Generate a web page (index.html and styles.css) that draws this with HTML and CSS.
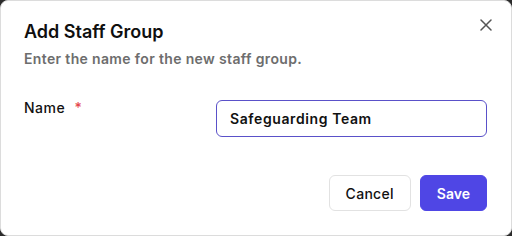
FILE: index.html
```html
<!DOCTYPE html>
<html lang="en">
<head>
    <meta charset="UTF-8">
    <meta name="viewport" content="width=device-width, initial-scale=1.0">
    <title>Add Staff Group</title>
    <link rel="stylesheet" href="styles.css">
</head>
<body>
    <div class="dialog">
        <div class="dialog-header">
            <h2 class="dialog-title">Add Staff Group</h2>
            <p class="dialog-desc">Enter the name for the new staff group.</p>
        </div>
        <button class="close-btn" aria-label="Close">
            <svg width="12" height="12" viewBox="0 0 12 12">
                <path d="M1 1 L11 11 M11 1 L1 11" stroke="#555" stroke-width="1.5" stroke-linecap="round"/>
            </svg>
        </button>
        <div class="form-row">
            <label for="groupName" class="label">Name <span class="required">*</span></label>
            <input id="groupName" class="input" type="text" value="Safeguarding Team">
        </div>
        <div class="actions">
            <button class="btn btn-outline">Cancel</button>
            <button class="btn btn-primary">Save</button>
        </div>
    </div>
</body>
</html>
```

FILE: styles.css
```css
body {
    margin: 0;
    background-color: #2b2b2b;
    font-family: 'Inter', 'Noto Sans', sans-serif;
    color: #111;
}
.dialog {
    position: relative;
    width: 512px;
    height: 236px;
    box-sizing: border-box;
    background-color: #fff;
    border: 1px solid #dcdcdc;
    border-radius: 8px;
    padding: 18px 24px 24px 23px;
    display: flex;
    flex-direction: column;
}
.dialog-title {
    margin: 0;
    font-size: 18px;
    line-height: 26px;
    font-weight: 600;
    color: #0f0f0f;
}
.dialog-desc {
    margin: 5px 0 0;
    font-size: 14px;
    line-height: 18px;
    font-weight: 600;
    letter-spacing: 0.35px;
    color: #6d6d6d;
}
.close-btn {
    position: absolute;
    top: 17px;
    right: 18px;
    background: none;
    border: none;
    padding: 0;
    width: 14px;
    height: 14px;
    display: flex;
    align-items: center;
    justify-content: center;
    cursor: pointer;
}
.form-row {
    display: grid;
    grid-template-columns: 192px 1fr;
    align-items: start;
    margin-top: 32px;
}
.label {
    font-size: 14px;
    font-weight: 500;
    line-height: 16px;
    letter-spacing: 0.5px;
}
.required {
    color: #e5484d;
    margin-left: 5px;
}
.input {
    height: 37px;
    box-sizing: border-box;
    border: 1.5px solid #5a51c9;
    border-radius: 6px;
    padding: 0 13px;
    font-family: inherit;
    font-size: 14px;
    font-weight: 600;
    letter-spacing: 0.6px;
    color: #111;
    outline: none;
}
.actions {
    margin-top: auto;
    display: flex;
    justify-content: flex-end;
    gap: 9px;
}
.btn {
    height: 36px;
    border-radius: 6px;
    font-family: inherit;
    font-size: 14px;
    font-weight: 500;
    letter-spacing: 0.3px;
    cursor: pointer;
}
.btn-outline {
    background-color: #fff;
    border: 1px solid #e2e2e2;
    color: #111;
    padding: 0 16px;
}
.btn-primary {
    background-color: #4f46e5;
    border: 1px solid #4f46e5;
    color: #fff;
    font-weight: 600;
    letter-spacing: 0;
    padding: 0 16px;
}
```
